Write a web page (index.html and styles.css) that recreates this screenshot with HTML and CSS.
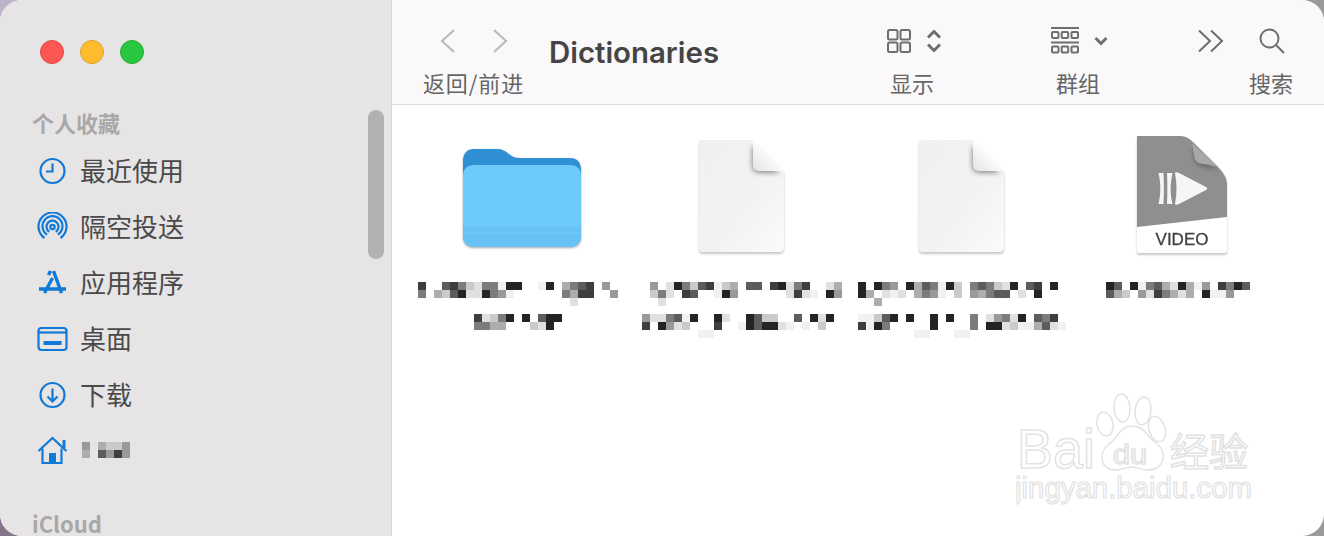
FILE: index.html
```html
<!DOCTYPE html>
<html lang="zh-CN">
<head>
  <meta charset="UTF-8" />
  <title>Dictionaries</title>
  <link rel="stylesheet" href="styles.css">
</head>
<body>
  <div class="window">
    <aside class="sidebar">
      <div class="lights">
        <span class="light red"></span>
        <span class="light yellow"></span>
        <span class="light green"></span>
      </div>
      <div class="side-head">个人收藏</div>
      <ul class="side-list">
        <li>
          <svg class="side-icon" viewBox="0 0 30 30"><circle cx="15" cy="15" r="12" /><path d="M15 7.500V15.500H8.500" /></svg>
          最近使用
        </li>
        <li>
          <svg class="side-icon" viewBox="0 0 30 30"><path d="M7 26A14 14 0 1 1 23 26" /><path d="M9.600 22.600A10 10 0 1 1 20.400 22.600" /><path d="M11.800 19.800A6 6 0 1 1 18.200 19.800" /><circle cx="15" cy="15" r="2.200" /></svg>
          隔空投送
        </li>
        <li>
          <svg class="side-icon" viewBox="0 0 30 30"><path class="thick" d="M16 3L24 25M13 3L11 7M15 10L7 25M1.500 21H28.500" /></svg>
          应用程序
        </li>
        <li>
          <svg class="side-icon" viewBox="0 0 30 30"><rect x="1" y="4" width="28" height="22" rx="3" /><path d="M1 8.500H29" /><rect class="solid" x="6" y="17" width="18" height="4" rx="0.500" /></svg>
          桌面
        </li>
        <li>
          <svg class="side-icon" viewBox="0 0 30 30"><circle cx="15" cy="15" r="12" /><path d="M15 8.500V21M10 16.500L15 21.500L20 16.500" /></svg>
          下载
        </li>
        <li>
          <svg class="side-icon home" viewBox="0 0 30 30"><path d="M1 15L15 2L24 10.500L29 15" /><path d="M5 12.500V27H24V12.500" /><rect class="solid" x="11.500" y="17" width="7" height="10" /><rect class="solid" x="25" y="4" width="3" height="8" /></svg>
          <span class="mosaic" data-rows="5.4335|4.7585"></span>
        </li>
      </ul>
      <div class="side-head cloud">iCloud</div>
      <div class="scrollbar"></div>
    </aside>

    <main class="main">
      <header class="toolbar">
        <div class="tool nav-tool">
          <div class="tool-icons nav-icons">
            <svg width="16" height="26" viewBox="0 0 16 26"><path class="chev" d="M14 2L2 13L14 24" /></svg>
            <svg width="16" height="26" viewBox="0 0 16 26"><path class="chev" d="M2 2L14 13L2 24" /></svg>
          </div>
          <div class="tool-label">返回/前进</div>
        </div>
        <h1 class="title">Dictionaries</h1>
        <div class="tool view-tool">
          <div class="tool-icons">
            <svg width="24" height="24" viewBox="0 0 24 24"><rect x="1" y="1" width="9.500" height="9.500" rx="1.500" /><rect x="13.500" y="1" width="9.500" height="9.500" rx="1.500" /><rect x="1" y="13.500" width="9.500" height="9.500" rx="1.500" /><rect x="13.500" y="13.500" width="9.500" height="9.500" rx="1.500" /></svg>
            <svg width="16" height="24" viewBox="0 0 16 24"><path class="bold" d="M2 8.500L8 2.500L14 8.500M2 15.500L8 21.500L14 15.500" /></svg>
          </div>
          <div class="tool-label">显示</div>
        </div>
        <div class="tool group-tool">
          <div class="tool-icons">
            <svg width="28" height="28" viewBox="0 0 28 28"><path d="M0 1H28M0 15.500H28" /><rect x="1" y="5" width="6.500" height="6" rx="1" /><rect x="10.700" y="5" width="6.500" height="6" rx="1" /><rect x="20.500" y="5" width="6.500" height="6" rx="1" /><rect x="1" y="19.500" width="6.500" height="6" rx="1" /><rect x="10.700" y="19.500" width="6.500" height="6" rx="1" /><rect x="20.500" y="19.500" width="6.500" height="6" rx="1" /></svg>
            <svg width="14" height="10" viewBox="0 0 14 10"><path class="bold" d="M1.500 2L7 7.500L12.500 2" /></svg>
          </div>
          <div class="tool-label">群组</div>
        </div>
        <div class="tool more-tool">
          <div class="tool-icons">
            <svg width="26" height="24" viewBox="0 0 26 24"><path d="M1 1.500L12 12L1 22.500M13 1.500L24 12L13 22.500" /></svg>
          </div>
        </div>
        <div class="tool search-tool">
          <div class="tool-icons">
            <svg width="26" height="26" viewBox="0 0 26 26"><circle cx="10.500" cy="10.500" r="9" /><path d="M17 17L25 25" /></svg>
          </div>
          <div class="tool-label">搜索</div>
        </div>
      </header>

      <section class="files">
        <div class="file">
          <div class="file-icon">
            <svg class="folder" width="118" height="100" viewBox="0 0 118 100">
              <path fill="#2f90d4" d="M0 14C0 5 4 1 11 1H33C40 1 42 3 46 6C50 9 52 10 58 10H107C114 10 118 14 118 22V40H0Z" />
              <path fill="#6fcafc" d="M0 28C0 20 5 17 12 17H106C113 17 118 20 118 28V88C118 95 114 99 106 99H12C4 99 0 95 0 88Z" />
              <path fill="#68c1f5" d="M0 79H118V88C118 95 114 99 106 99H12C4 99 0 95 0 88Z" />
              <path fill="#6cc6f9" d="M0 84H118V86H0Z" />
            </svg>
          </div>
          <div class="mosaic-label" data-lines="6,0,8..7863266199..19.4678.5.;6,8,6.4379229651......6488..5;6,16,...................2;62,32,82369.9.799;62,40,6644...329."></div>
        </div>
        <div class="file">
          <div class="file-icon">
            <svg class="doc" width="88" height="116" viewBox="0 0 88 116">
              <defs>
                <linearGradient id="page" x1="0" y1="0" x2="1" y2="1"><stop offset="0" stop-color="#f0f0f0" /><stop offset=".6" stop-color="#f3f3f3" /><stop offset="1" stop-color="#fbfbfb" /></linearGradient>
                <linearGradient id="fold" x1="0" y1="1" x2="1" y2="0"><stop offset="0" stop-color="#e2e2e2" /><stop offset=".55" stop-color="#fdfdfd" /></linearGradient>
                <filter id="soft" x="-30%" y="-30%" width="160%" height="160%"><feGaussianBlur stdDeviation="2.500" /></filter>
              </defs>
              <path fill="url(#page)" d="M5 1H54L86 33V108C86 111 84 113 81 113H5C2 113 1 111 1 108V5C1 2 2 1 5 1Z" />
              <path fill="#8f8f8f" filter="url(#soft)" d="M54 6V26C54 31 57 34 62 34H82Z" />
              <path fill="url(#fold)" d="M55 1V25C55 30 57 32 62 32H86Z" />
            </svg>
          </div>
          <div class="mosaic-label" data-lines="18,0,5.296378134.77.89268..24;18,8,362.87..195......2821.95;18,16,.2;10,32,5226719..92..9733..7.929;10,40,8.9523...8..1979921.1.3.;10,48,.......11"></div>
        </div>
        <div class="file">
          <div class="file-icon">
            <svg class="doc" width="88" height="116" viewBox="0 0 88 116">
              <path fill="url(#page)" d="M5 1H54L86 33V108C86 111 84 113 81 113H5C2 113 1 111 1 108V5C1 2 2 1 5 1Z" />
              <path fill="#8f8f8f" filter="url(#soft)" d="M54 6V26C54 31 57 34 62 34H82Z" />
              <path fill="url(#fold)" d="M55 1V25C55 30 57 32 62 32H86Z" />
            </svg>
          </div>
          <div class="mosaic-label" data-lines="6,0,9.965.9476193.676329.78.9;6,8,94.212.4651.3.54677.2.9;6,16,..4;6,32,11379.9..9.9..6.25629.768;6,40,8196.....9....6.9923114721;6,48,.......11...11"></div>
        </div>
        <div class="file">
          <div class="file-icon">
            <svg class="doc video" width="92" height="120" viewBox="0 0 92 120">
              <path fill="#ffffff" d="M1 1H44C50 1 54 4 58 8L80 30C87 37 91 42 91 50V115C91 117 90 118 88 118H3C2 118 1 117 1 115Z" />
              <path fill="#8f8f8f" d="M1 1H44C50 1 54 4 58 8L80 30C87 37 91 42 91 50V82L1 92Z" />
              <path fill="#4f4f4f" filter="url(#soft)" opacity=".7" d="M56 12C58 18 58 24 61 29C66 32 74 32 82 36Z" />
              <path fill="#a8a8a8" d="M56 8L82 32C74 29 66 30 61 27C57 24 58 15 56 8Z" />
              <path fill="#f6f6f6" d="M22.500 38H27.500C28 50 28 58 27.500 69H22.500C25 58 25 50 22.500 38Z" />
              <path fill="#f6f6f6" d="M31 38H36.500C34 50 34 58 36.500 69H31C31.500 58 31.500 50 31 38Z" />
              <path fill="#f6f6f6" d="M39 38C39 37 41 37 43 38L70 52C71.500 53 71.500 54 70 55L43 69C41 70 39 70 39 69C41 58 41 49 39 38Z" />
              <text class="video-text" x="46" y="110" text-anchor="middle">VIDEO</text>
            </svg>
          </div>
          <div class="mosaic-label" data-lines="34,0,97.91674294 15.8697;34,8,743.5286424.9115"></div>
        </div>
      </section>

      <svg class="watermark" width="250" height="125" viewBox="0 0 250 125">
        <ellipse cx="106" cy="17" rx="8" ry="14" transform="rotate(-4 106 17)" />
        <ellipse cx="127" cy="20" rx="8" ry="14" transform="rotate(6 127 20)" />
        <ellipse cx="89" cy="33" rx="8" ry="12" transform="rotate(-12 89 33)" />
        <ellipse cx="141" cy="38" rx="8" ry="13" transform="rotate(-18 141 38)" />
        <path d="M116 35C128 35 132 46 140 52C152 60 149 79 132 79C124 79 122 76 116 76C110 76 106 79 100 79C84 79 82 62 92 54C102 47 104 35 116 35Z" />
        <text class="wm-big" x="1" y="77" textLength="78" lengthAdjust="spacingAndGlyphs">Bai</text>
        <text class="wm-du" x="97" y="73" textLength="34" lengthAdjust="spacingAndGlyphs">du</text>
        <text class="wm-cn" x="154" y="75">经验</text>
        <text class="wm-url" x="-1" y="107" textLength="237" lengthAdjust="spacingAndGlyphs">jingyan.baidu.com</text>
      </svg>
    </main>
  </div>
  <script src="script.js"></script>
</body>
</html>
```

FILE: styles.css
```css
* {
  box-sizing: border-box;
}

html, body {
  margin: 0;
  height: 100%;
  overflow: hidden;
}

body {
  background:
    linear-gradient(to right, transparent 50%, #9a9a9a 50%),
    linear-gradient(#bdb3ca, #83748a);
  font-family: "Noto Sans CJK SC", "Noto Sans", sans-serif;
  color: #444;
}

.window {
  display: flex;
  width: 1324px;
  height: 536px;
  border-radius: 22px;
  overflow: hidden;
  background: #fff;
}

/* sidebar */
.sidebar {
  position: relative;
  width: 392px;
  padding: 0 0 0 32px;
  background: #e6e4e5;
  border-right: 1px solid #d9d8d9;
  overflow: hidden;
}

.lights {
  display: flex;
  gap: 16px;
  margin: 40px 0 0 8px;
}

.light {
  width: 24px;
  height: 24px;
  border-radius: 50%;
}

.red { background: #fd5754; border: 1px solid #df4744; }
.yellow { background: #febb2e; border: 1px solid #de9f2a; }
.green { background: #29c73f; border: 1px solid #27ab35; }

.side-head {
  margin-top: 42px;
  height: 32px;
  font-size: 22px;
  line-height: 32px;
  font-weight: 700;
  color: #a9a8a9;
}

.side-head.cloud {
  margin-top: 30px;
}

.side-list {
  list-style: none;
  margin: 3px 0 0;
  padding: 0;
}

.side-list li {
  display: flex;
  align-items: center;
  gap: 10px;
  height: 56px;
  font-size: 26px;
  color: #4a4a4a;
}

.side-icon {
  width: 35px;
  height: 30px;
  margin: 4px 0 0 3px;
  fill: none;
  stroke: #0f7ad8;
  stroke-width: 2.200;
}

.side-icon .thick {
  stroke-width: 3.400;
}

.side-icon .solid {
  fill: #0f7ad8;
  stroke: none;
}

.scrollbar {
  position: absolute;
  left: 368px;
  top: 110px;
  width: 16px;
  height: 149px;
  border-radius: 8px;
  background: #b2b0b1;
}

.mosaic {
  display: block;
  margin: 2px 0 0 2px;
}

/* toolbar */
.main {
  position: relative;
  flex: 1;
}

.toolbar {
  display: flex;
  height: 105px;
  padding-left: 31px;
  background: #faf8f9;
  border-bottom: 1px solid #dcdbdc;
}

.tool {
  display: flex;
  flex-direction: column;
  align-items: center;
}

.tool-icons {
  display: flex;
  align-items: center;
  justify-content: center;
  height: 28px;
  margin-top: 27px;
}

.tool-icons svg {
  fill: none;
  stroke: #6e6e6e;
  stroke-width: 2;
}

.tool-icons .bold {
  stroke-width: 3;
}

.tool-icons .chev {
  stroke: #b9b9b9;
}

.tool-label {
  margin-top: 11px;
  font-size: 22px;
  line-height: 32px;
  color: #666;
  white-space: nowrap;
}

.nav-tool {
  width: 101px;
}

.nav-tool .tool-label {
  letter-spacing: .9px;
}

.nav-icons {
  gap: 36px;
}

.title {
  margin: 33px 0 0 25px;
  width: 337px;
  font-family: Inter, sans-serif;
  font-size: 29.400px;
  line-height: 40px;
  font-weight: 600;
  color: #454545;
}

.view-tool {
  width: 56px;
}

.view-tool .tool-icons {
  gap: 15px;
}

.view-tool .tool-label {
  margin-right: 4px;
}

.group-tool {
  width: 60px;
  margin-left: 107px;
}

.group-tool .tool-icons {
  gap: 15px;
}

.group-tool .tool-label {
  margin-right: 2px;
}

.more-tool {
  width: 26px;
  margin-left: 89px;
}

.search-tool {
  width: 44px;
  margin-left: 26px;
}

.search-tool .tool-label {
  margin-right: 2px;
}

/* files */
.files {
  display: flex;
  padding: 30px 0 0 20px;
}

.file {
  width: 220px;
}

.file-icon {
  display: flex;
  justify-content: center;
  align-items: flex-end;
  height: 120px;
}

.folder {
  margin-bottom: 7px;
  filter: drop-shadow(0 1px 1px rgba(0, 0, 0, .35));
}

.doc {
  filter: drop-shadow(0 2px 1px rgba(0, 0, 0, .22));
}

.video-text {
  font-family: "Liberation Sans", sans-serif;
  font-size: 17px;
  fill: #3f3f3f;
  stroke: #3f3f3f;
  stroke-width: .3;
}

.mosaic-label {
  height: 56px;
  margin-top: 27px;
}

.mosaic-label svg,
.mosaic svg {
  display: block;
}

/* watermark */
.watermark {
  position: absolute;
  left: 624px;
  top: 391px;
  fill: #fff;
  stroke: #e2e2e2;
  stroke-width: 1.500;
}

.watermark text {
  font-family: "Liberation Sans", sans-serif;
}

.wm-big {
  font-size: 55px;
}

.wm-du {
  font-size: 28px;
}

.watermark .wm-cn {
  font-family: "Noto Sans CJK SC", sans-serif;
  font-size: 39px;
}

.wm-url {
  font-size: 30px;
  stroke-width: 1.200;
}
```

FILE: script.js
```js
// the blurred file names are drawn as cells of grey, 8px each
const CELL = 8;
const SHADES = {
  1: "#f1f1f1",
  2: "#e0e0e0",
  3: "#cacaca",
  4: "#adadad",
  5: "#999999",
  6: "#7c7c7c",
  7: "#5c5c5c",
  8: "#3e3e3e",
  9: "#242424"
};

function addRow(svg, text, x, y) {
  [...text].forEach((ch, i) => {
    if (!SHADES[ch]) return;
    const rect = document.createElementNS("http://www.w3.org/2000/svg", "rect");
    rect.setAttribute("x", x + i * CELL);
    rect.setAttribute("y", y);
    rect.setAttribute("width", CELL);
    rect.setAttribute("height", CELL);
    rect.setAttribute("fill", SHADES[ch]);
    svg.appendChild(rect);
  });
}

function makeSvg(width, height) {
  const svg = document.createElementNS("http://www.w3.org/2000/svg", "svg");
  svg.setAttribute("width", width);
  svg.setAttribute("height", height);
  return svg;
}

document.querySelectorAll(".mosaic-label").forEach(el => {
  const svg = makeSvg(220, 56);
  el.dataset.lines.split(";").forEach(line => {
    const [x, y, text] = line.split(",");
    addRow(svg, text.replace(/ /g, ""), +x, +y);
  });
  el.appendChild(svg);
});

document.querySelectorAll(".mosaic").forEach(el => {
  const rows = el.dataset.rows.split("|");
  const svg = makeSvg(rows[0].length * CELL, rows.length * CELL);
  rows.forEach((row, i) => addRow(svg, row, 0, i * CELL));
  el.appendChild(svg);
});
```
